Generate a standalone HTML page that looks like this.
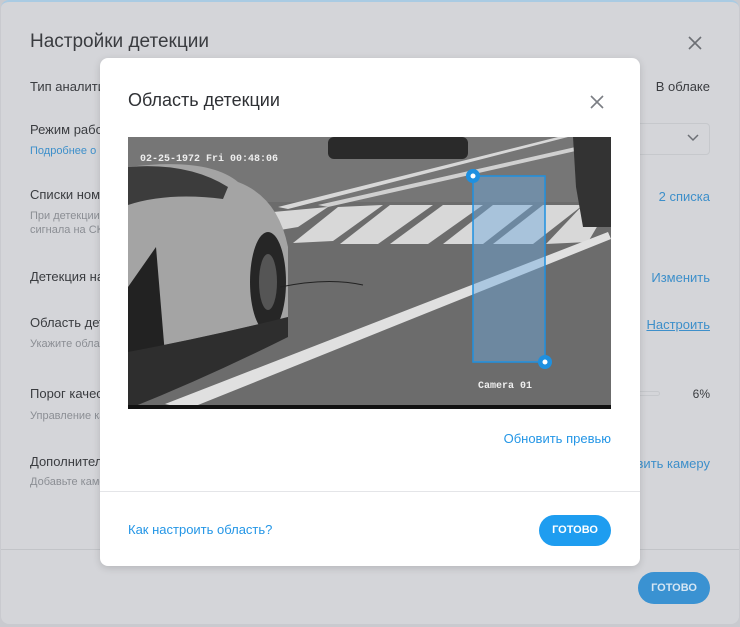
<!DOCTYPE html>
<html><head><meta charset="utf-8"><style>
*{margin:0;padding:0;box-sizing:border-box}
body{width:740px;height:627px;overflow:hidden;background:#c9cacf;font-family:"Liberation Sans",sans-serif;position:relative}
.outer{position:absolute;left:1px;top:0;width:738px;height:624px;background:#d4d5d9;border-radius:8px;border-top:2px solid #a9cbe3}
.t{position:absolute;white-space:nowrap}
.r{position:absolute;white-space:nowrap;right:30px;text-align:right}
.h{font-size:13px;color:#3a3c40}
.s{font-size:11px;color:#8b8e94}
.l{font-size:13px;color:#3d8fca}
.modal{position:absolute;left:100px;top:58px;width:540px;height:508px;background:#fff;border-radius:8px;box-shadow:0 2px 8px rgba(0,0,0,.15)}
</style></head><body>
<div class="outer"></div>
<div class="t" style="left:30px;top:31px;font-size:19px;color:#3a3c40">Настройки детекции</div>
<svg class="t" style="left:688px;top:36px" width="14" height="14"><path d="M1 1L13 13M13 1L1 13" stroke="#6c6f75" stroke-width="1.6"/></svg>
<div class="t h" style="left:30px;top:79px">Тип аналитики</div>
<div class="r h" style="top:79px">В облаке</div>
<div class="t h" style="left:30px;top:122px">Режим работы</div>
<div class="t s" style="left:30px;top:145px;color:#3d8fca">Подробнее о режимах</div>
<div class="t" style="left:600px;top:123px;width:110px;height:32px;border:1px solid #c6c8cc;border-radius:4px;background:#d4d5d9"></div>
<svg class="t" style="left:687px;top:134px" width="12" height="8"><path d="M1 1L6 6L11 1" stroke="#6c6f75" stroke-width="1.5" fill="none"/></svg>
<div class="t h" style="left:30px;top:187px">Списки номеров</div>
<div class="t s" style="left:30px;top:210px">При детекции</div>
<div class="t s" style="left:30px;top:224px">сигнала на СКУД</div>
<div class="r l" style="top:189px">2 списка</div>
<div class="t h" style="left:30px;top:269px">Детекция на</div>
<div class="r l" style="top:270px">Изменить</div>
<div class="t h" style="left:30px;top:315px">Область детекции</div>
<div class="t s" style="left:30px;top:338px">Укажите область</div>
<div class="r l" style="top:317px;text-decoration:underline">Настроить</div>
<div class="t h" style="left:30px;top:386px">Порог качества</div>
<div class="t s" style="left:30px;top:410px">Управление качеством</div>
<div class="t" style="left:620px;top:391px;width:40px;height:5px;border:1px solid #c6c8cc;border-radius:3px"></div>
<div class="r" style="top:387px;font-size:12px;color:#3a3c40">6%</div>
<div class="t h" style="left:30px;top:454px">Дополнительно</div>
<div class="t s" style="left:30px;top:476px">Добавьте камеру</div>
<div class="r l" style="top:456px">Добавить камеру</div>
<div class="t" style="left:1px;top:549px;width:738px;height:1px;background:#c2c4c8"></div>
<div class="t" style="left:638px;top:572px;width:72px;height:32px;border-radius:16px;background:#3a92d2;color:#d6e6f3;font-size:11px;font-weight:bold;text-align:center;line-height:32px">ГОТОВО</div>

<div class="modal">
<div class="t" style="left:28px;top:32px;font-size:18px;color:#2f3135">Область детекции</div>
<svg class="t" style="left:490px;top:37px" width="14" height="14"><path d="M1 1L13 13M13 1L1 13" stroke="#7b7e84" stroke-width="1.6"/></svg>
<svg class="t" style="left:28px;top:79px" width="483" height="272" viewBox="0 0 483 272">
<rect width="483" height="272" fill="#6c6c6c"/>
<rect width="483" height="65" fill="#767676"/>
<path d="M150 70L430 0L440 0L160 72Z" fill="#d8d8d8"/>
<path d="M190 68L483 2L483 6L200 70Z" fill="#d0d0d0"/>
<g fill="#d8d8d8">
<path d="M145 75L200 70L170 90L140 95Z"/>
<path d="M210 70L255 68L205 104L165 106Z"/>
<path d="M262 68L305 68L250 107L212 107Z"/>
<path d="M315 68L355 68L300 107L262 107Z"/>
<path d="M365 68L405 68L355 107L315 107Z"/>
<path d="M415 68L455 68L405 107L365 107Z"/>
<path d="M455 68L483 66L460 105L418 107Z"/>
</g>
<path d="M37 267L480 95L483 102L60 272Z" fill="#e0e0e0"/>
<rect x="200" y="0" width="140" height="22" rx="6" fill="#2a2a2a"/>
<path d="M445 0L483 0L483 90L455 90L448 50Z" fill="#333"/>
<path d="M0 30Q80 20 110 45Q150 60 160 110L160 180Q80 200 0 215Z" fill="#a4a4a4"/>
<path d="M0 30Q60 25 100 50L95 62Q40 55 0 68Z" fill="#3c3c3c"/>
<ellipse cx="140" cy="145" rx="18" ry="50" fill="#262626"/>
<ellipse cx="140" cy="145" rx="9" ry="28" fill="#555"/>
<path d="M0 150L28 110L38 230L0 260Z" fill="#222"/>
<path d="M0 215Q80 200 160 180L160 200Q80 240 0 272Z" fill="#2e2e2e"/>
<path d="M152 150Q200 140 235 148" stroke="#222" fill="none"/>
<rect y="268" width="483" height="4" fill="#111"/>
<text x="12" y="24" font-family="Liberation Mono,monospace" font-size="10" font-weight="bold" fill="#eee">02-25-1972 Fri 00:48:06</text>
<text x="350" y="251" font-family="Liberation Mono,monospace" font-size="10" font-weight="bold" fill="#eee">Camera 01</text>
<rect x="345" y="39" width="72" height="186" fill="rgba(110,170,225,0.45)" stroke="#1e90e0" stroke-width="1.5"/>
<circle cx="345" cy="39" r="7" fill="#1e90e0"/><circle cx="345" cy="39" r="2.5" fill="#fff"/>
<circle cx="417" cy="225" r="7" fill="#1e90e0"/><circle cx="417" cy="225" r="2.5" fill="#fff"/>
</svg>
<div class="t" style="right:29px;top:373px;font-size:13px;color:#2496e6">Обновить превью</div>
<div class="t" style="left:0;top:433px;width:540px;height:1px;background:#e4e5e8"></div>
<div class="t" style="left:28px;top:464px;font-size:13px;color:#2496e6">Как настроить область?</div>
<div class="t" style="left:439px;top:457px;width:72px;height:31px;border-radius:16px;background:#1e9df0;color:#fff;font-size:11px;font-weight:bold;text-align:center;line-height:31px">ГОТОВО</div>
</div>
</body></html>
